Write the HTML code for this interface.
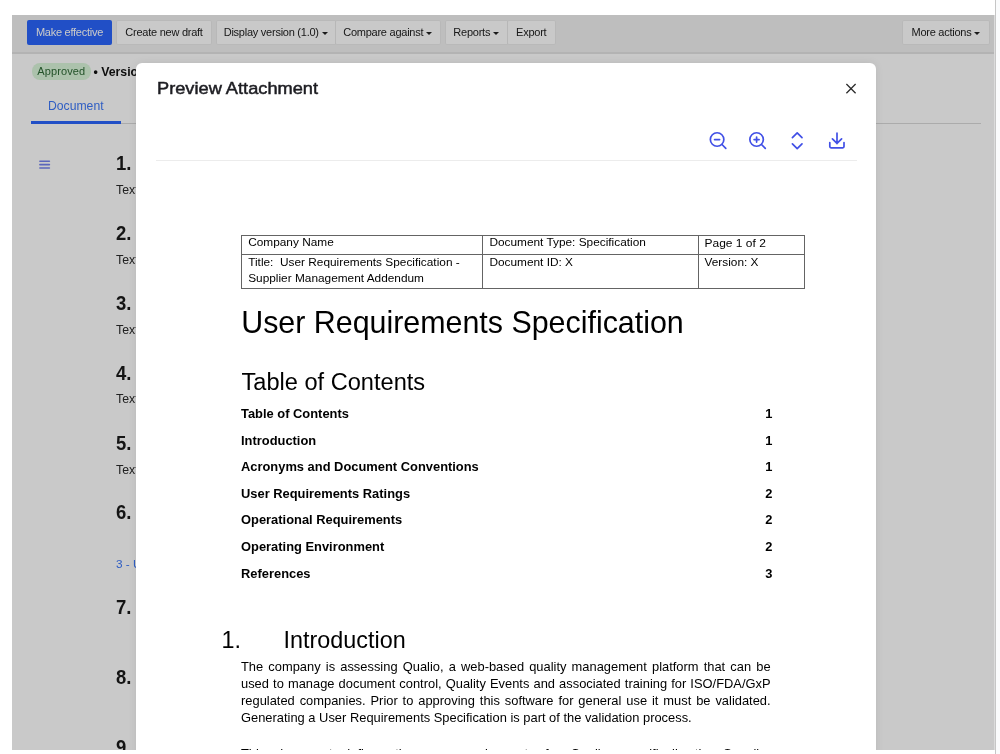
<!DOCTYPE html>
<html>
<head>
<meta charset="utf-8">
<style>
*{box-sizing:border-box;margin:0;padding:0}
html,body{width:1000px;height:754px;overflow:hidden;background:#fff;font-family:"Liberation Sans",sans-serif}
#sb{position:absolute;left:995px;top:0;width:5px;height:754px;background:#fafbfc;border-left:1px solid #c6c6c6}
#app{will-change:transform;position:absolute;left:12px;top:15px;width:982px;height:735px;overflow:hidden;background:#fff}
.abs{position:absolute}
#tb{position:absolute;left:0;top:0;width:982px;height:38.8px;background:#f1f1f1;border-bottom:2.8px solid #e4e4e4}
.btn{position:absolute;top:5.8px;height:23.2px;background:#fff;box-shadow:0 0 0 0.8px #e9e9e9;color:#222;font-size:11px;letter-spacing:-0.25px;line-height:22px;text-align:center;border-radius:1px;white-space:nowrap}
.btn.primary{background:#2a65fb;color:#fff;box-shadow:none}
.caret{display:inline-block;width:0;height:0;border-left:3px solid transparent;border-right:3px solid transparent;border-top:3px solid #222;vertical-align:middle;margin-left:3px;position:relative;top:1px}
#overlay{position:absolute;left:0;top:0;width:982px;height:735px;background:rgba(0,0,0,0.21)}
#modal{position:absolute;left:124px;top:48px;width:740px;height:760px;background:#fff;border-radius:6px;box-shadow:0 0 8px rgba(0,0,0,0.08)}
.h{position:absolute;font-weight:bold;font-size:18.5px;line-height:1;color:#1a1a1a;left:104px;transform:scaleY(1.06);transform-origin:0 0.85em}
.dt{position:absolute;line-height:1;color:#000;white-space:nowrap;transform:scaleY(1.045);transform-origin:0 0.85em}
.t{position:absolute;font-size:12.3px;line-height:1;color:#2a2a2a;left:104px}
.ln{position:absolute;background:#646464}
</style>
</head>
<body>
<div id="sb"></div><div class="abs" style="left:994px;top:15px;width:1px;height:735px;background:#dcdcdc"></div>
<div id="app">
  <div id="tb">
    <div class="btn primary" style="left:15px;width:85px;top:5px;height:24.8px;line-height:25px;border-radius:2px">Make effective</div>
    <div class="btn" style="left:105px;width:94px">Create new draft</div>
    <div class="btn" style="left:205px;width:118.5px;border-right:1px solid #e6e6e6">Display version (1.0)<span class="caret"></span></div>
    <div class="btn" style="left:323.5px;width:104.5px">Compare against<span class="caret"></span></div>
    <div class="btn" style="left:434px;width:61.5px;border-right:1px solid #e6e6e6">Reports<span class="caret"></span></div>
    <div class="btn" style="left:495.5px;width:47.5px">Export</div>
    <div class="btn" style="left:891px;width:86px">More actions<span class="caret"></span></div>
  </div>
<div class="abs" style="left:19.5px;top:48px;width:59.5px;height:16.5px;border-radius:8px;background:#dbf6db;color:#2d6a35;font-size:11px;line-height:17px;text-align:center;letter-spacing:0.1px">Approved</div>
<div class="abs" style="left:81.5px;top:49px;font-size:12.3px;font-weight:bold;color:#111;line-height:17px;white-space:nowrap">&bull; Version 1.0</div>
<div class="abs" style="left:36px;top:83px;font-size:12.2px;color:#3d78f8;line-height:16px">Document</div>
<div class="abs" style="left:19px;top:108px;width:950px;height:1px;background:#d9d9d9"></div>
<div class="abs" style="left:19px;top:106px;width:90px;height:3px;background:#2a65fb"></div>
<svg class="abs" style="left:0;top:0" width="60" height="180"><path d="M27.9 146.30H37.4M27.9 149.65H37.4M27.9 153.00H37.4" stroke="#7482ee" stroke-width="1.6" stroke-linecap="round"/></svg>
<div class="h" style="top:140px">1.</div>
<div class="t" style="top:169px">Text</div>
<div class="h" style="top:210px">2.</div>
<div class="t" style="top:239px">Text</div>
<div class="h" style="top:280px">3.</div>
<div class="t" style="top:309px">Text</div>
<div class="h" style="top:350px">4.</div>
<div class="t" style="top:378px">Text</div>
<div class="h" style="top:420px">5.</div>
<div class="t" style="top:449px">Text</div>
<div class="h" style="top:489px">6.</div>
<div class="t" style="top:544px;color:#3d78f8;font-size:11.8px">3 - User</div>
<div class="h" style="top:584px">7.</div>
<div class="h" style="top:654px">8.</div>
<div class="h" style="top:724px">9.</div>
<div id="overlay"></div>
<div id="modal">
<div class="abs" style="left:21px;top:16px;font-size:17px;line-height:20px;color:#1d1d22;white-space:nowrap;transform:scaleX(1.072);transform-origin:0 0;-webkit-text-stroke:0.5px #1d1d22">Preview Attachment</div>
<svg class="abs" style="left:0;top:0" width="740" height="100" viewBox="0 0 740 100">
      <path d="M710.4 21L719.6 30.3M719.6 21L710.4 30.3" stroke="#2a2a2a" stroke-width="1.25" fill="none"/>
      <g stroke="#4150e6" stroke-width="1.7" fill="none" stroke-linecap="round" stroke-linejoin="round">
        <circle cx="581.1" cy="76.5" r="6.75"/>
        <path d="M586 81.5L589.8 85.3M578.6 76.6H583.6"/>
        <circle cx="620.6" cy="76.5" r="6.75"/>
        <path d="M625.5 81.5L629.3 85.3M618.1 76.6H623.1M620.6 74.1V79.1"/>
        <path d="M656.4 74.6L661.2 69.8L666 74.6M656.4 80.9L661.2 85.7L666 80.9"/>
        <path d="M701 70.2V80.6M696.4 75.8L701 80.4L705.6 75.8M693.8 79.6V83.5Q693.8 84.8 695 84.8H706.8Q708 84.8 708 83.5V79.6"/>
      </g>
    </svg>
<div class="abs" style="left:20px;top:97px;width:701px;height:1px;background:#ececec"></div>
<div class="ln" style="left:105px;top:171.7px;width:564px;height:1.1px"></div>
<div class="ln" style="left:105px;top:190.9px;width:564px;height:1.2px"></div>
<div class="ln" style="left:105px;top:224.5px;width:564px;height:1px"></div>
<div class="ln" style="left:105px;top:172px;width:1px;height:53.30000000000001px"></div>
<div class="ln" style="left:346px;top:172px;width:1px;height:53.30000000000001px"></div>
<div class="ln" style="left:562px;top:172px;width:1px;height:53.30000000000001px"></div>
<div class="ln" style="left:668px;top:172px;width:1px;height:53.30000000000001px"></div>
<div class="dt" style="left:112.2px;top:174px;font-size:11.85px;transform:scaleY(0.95)">Company Name</div>
<div class="dt" style="left:112.2px;top:194px;font-size:11.85px;transform:scaleY(0.95)">Title:&nbsp; User Requirements Specification -</div>
<div class="dt" style="left:112.2px;top:210px;font-size:11.85px;transform:scaleY(0.95)">Supplier Management Addendum</div>
<div class="dt" style="left:353.4px;top:174px;font-size:11.85px;transform:scaleY(0.95)">Document Type: Specification</div>
<div class="dt" style="left:353.4px;top:194px;font-size:11.85px;transform:scaleY(0.95)">Document ID: X</div>
<div class="dt" style="left:568.5px;top:174px;font-size:12px;transform:scaleY(0.95)">Page 1 of 2</div>
<div class="dt" style="left:568.5px;top:194px;font-size:11.85px;transform:scaleY(0.95)">Version: X</div>
<div class="dt" style="left:105.2px;top:244px;font-size:30.4px;">User Requirements Specification</div>
<div class="dt" style="left:105.5px;top:308px;font-size:23.6px;">Table of Contents</div>
<div class="dt" style="left:105px;top:345px;font-size:12.9px;font-weight:bold">Table of Contents</div>
<div class="dt" style="left:564px;width:72.5px;text-align:right;top:345px;font-size:12.9px;font-weight:bold">1</div>
<div class="dt" style="left:105px;top:372px;font-size:12.9px;font-weight:bold">Introduction</div>
<div class="dt" style="left:564px;width:72.5px;text-align:right;top:372px;font-size:12.9px;font-weight:bold">1</div>
<div class="dt" style="left:105px;top:398px;font-size:12.9px;font-weight:bold">Acronyms and Document Conventions</div>
<div class="dt" style="left:564px;width:72.5px;text-align:right;top:398px;font-size:12.9px;font-weight:bold">1</div>
<div class="dt" style="left:105px;top:425px;font-size:12.9px;font-weight:bold">User Requirements Ratings</div>
<div class="dt" style="left:564px;width:72.5px;text-align:right;top:425px;font-size:12.9px;font-weight:bold">2</div>
<div class="dt" style="left:105px;top:451px;font-size:12.9px;font-weight:bold">Operational Requirements</div>
<div class="dt" style="left:564px;width:72.5px;text-align:right;top:451px;font-size:12.9px;font-weight:bold">2</div>
<div class="dt" style="left:105px;top:478px;font-size:12.9px;font-weight:bold">Operating Environment</div>
<div class="dt" style="left:564px;width:72.5px;text-align:right;top:478px;font-size:12.9px;font-weight:bold">2</div>
<div class="dt" style="left:105px;top:505px;font-size:12.9px;font-weight:bold">References</div>
<div class="dt" style="left:564px;width:72.5px;text-align:right;top:505px;font-size:12.9px;font-weight:bold">3</div>
<div class="dt" style="left:85.5px;top:566px;font-size:23.4px;">1.</div>
<div class="dt" style="left:147.5px;top:566px;font-size:23.4px;">Introduction</div>
<div class="dt" style="left:105px;top:598px;font-size:12.9px;width:529.6px;text-align:justify;text-align-last:justify">The company is assessing Qualio, a web-based quality management platform that can be</div>
<div class="dt" style="left:105px;top:615px;font-size:12.9px;width:529.6px;text-align:justify;text-align-last:justify">used to manage document control, Quality Events and associated training for ISO/FDA/GxP</div>
<div class="dt" style="left:105px;top:632px;font-size:12.9px;width:529.6px;text-align:justify;text-align-last:justify">regulated companies. Prior to approving this software for general use it must be validated.</div>
<div class="dt" style="left:105px;top:649px;font-size:12.9px;">Generating a User Requirements Specification is part of the validation process.</div>
<div class="dt" style="left:105px;top:685px;font-size:12.9px;width:529.6px;text-align:justify;text-align-last:justify">This document defines the user requirements for Qualio, specifically the Supplier</div>
</div>
</div>
</body>
</html>
